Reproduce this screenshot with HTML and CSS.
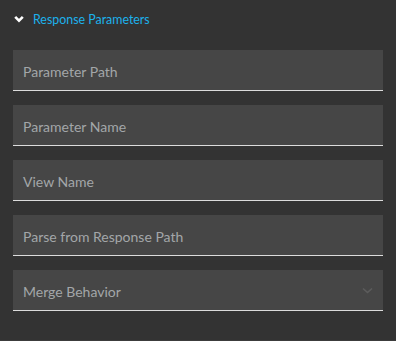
FILE: index.html
```html
<!DOCTYPE html>
<html lang="en">
<head>
    <meta charset="UTF-8">
    <title>Response Parameters</title>
    <link rel="stylesheet" href="styles.css">
</head>
<body>
    <div class="panel">
        <div class="section-head">
            <svg class="chevron" width="10" height="8" viewBox="0 0 10 8">
                <path d="M1.2 1.8 L5 5.6 L8.8 1.8" fill="none" stroke="#fff" stroke-width="2.6"/>
            </svg>
            <span class="section-title">Response Parameters</span>
        </div>
        <div class="fields">
            <div class="field"><span class="placeholder">Parameter Path</span></div>
            <div class="field"><span class="placeholder">Parameter Name</span></div>
            <div class="field"><span class="placeholder">View Name</span></div>
            <div class="field"><span class="placeholder">Parse from Response Path</span></div>
            <div class="field select">
                <span class="placeholder">Merge Behavior</span>
                <svg class="caret" width="11" height="7" viewBox="0 0 11 7">
                    <path d="M1 1.5 L5.5 5.5 L10 1.5" fill="none" stroke="#5c5c5c" stroke-width="1.6"/>
                </svg>
            </div>
        </div>
    </div>
</body>
</html>
```

FILE: styles.css
```css
body {
    margin: 0;
    padding: 0;
    background: #333333;
    font-family: 'Lato', 'Noto Sans', Arial, sans-serif;
}
.panel {
    height: 340px;
    border-bottom: 1px solid #3c3c3c;
    padding: 0 13px;
}
.section-head {
    display: flex;
    align-items: center;
    height: 38px;
    padding-left: 1px;
}
.chevron {
    margin-right: 9px;
}
.section-title {
    color: #1cb2ec;
    font-size: 12.4px;
}
.fields {
    display: flex;
    flex-direction: column;
    gap: 14px;
    margin-top: 12px;
}
.field {
    background: #464646;
    border-bottom: 1px solid #dcdcdc;
    display: flex;
    align-items: center;
    justify-content: space-between;
    padding: 2px 10px 0 10px;
    box-sizing: border-box;
    height: 41px;
}
.placeholder {
    color: #a3a6a9;
    font-size: 14px;
}
.caret {
    margin-bottom: 2px;
}
```
